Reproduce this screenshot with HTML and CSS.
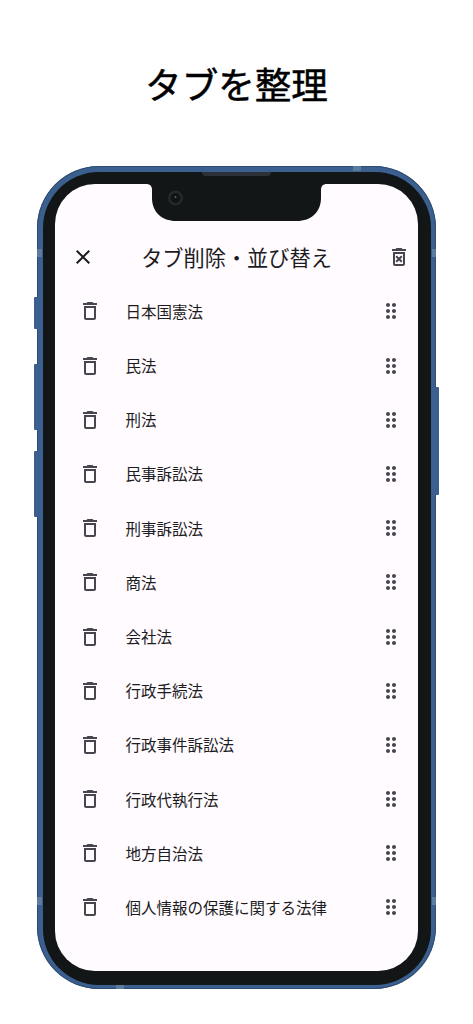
FILE: index.html
```html
<!DOCTYPE html>
<html lang="ja">
<head>
<meta charset="utf-8">
<title>タブを整理</title>
<link rel="stylesheet" href="styles.css">
</head>
<body>
<svg class="defs" width="0" height="0" aria-hidden="true">
  <symbol id="i-del" viewBox="0 0 24 24"><path d="M6 19c0 1.1.9 2 2 2h8c1.1 0 2-.9 2-2V7H6v12zM8 9h8v10H8V9zm7.5-5l-1-1h-5l-1 1H5v2h14V4z"/></symbol>
  <symbol id="i-drag" viewBox="0 0 24 24"><path d="M11 18c0 1.1-.9 2-2 2s-2-.9-2-2 .9-2 2-2 2 .9 2 2zm-2-8c-1.1 0-2 .9-2 2s.9 2 2 2 2-.9 2-2-.9-2-2-2zm0-6c-1.1 0-2 .9-2 2s.9 2 2 2 2-.9 2-2-.9-2-2-2zm6 4c1.1 0 2-.9 2-2s-.9-2-2-2-2 .9-2 2 .9 2 2 2zm0 2c-1.1 0-2 .9-2 2s.9 2 2 2 2-.9 2-2-.9-2-2-2zm0 6c-1.1 0-2 .9-2 2s.9 2 2 2 2-.9 2-2-.9-2-2-2z"/></symbol>
</svg>
<header class="page-head"><h1>タブを整理</h1></header>
<div class="phone">
  <span class="btn btn-a"></span><span class="btn btn-b"></span><span class="btn btn-c"></span><span class="btn btn-r"></span>
  <span class="band band-t"></span><span class="band band-b"></span>
  <span class="band band-l1"></span><span class="band band-l2"></span><span class="band band-r1"></span><span class="band band-r2"></span>
  <div class="bezel">
    <span class="speaker"></span>
    <main class="screen">
      <svg class="notch" width="181" height="37" viewBox="0 0 181 37" aria-hidden="true">
        <path class="notch-shape" d="M0 0C4 0 6 2 6 6V14C6 28 16 37 30 37H151C165 37 175 28 175 14V6C175 2 177 0 181 0Z"/>
        <circle class="cam-ring" cx="29.5" cy="14" r="7.5"/>
        <circle class="cam-lens" cx="29.5" cy="14" r="5"/>
        <circle class="cam-dot" cx="29.5" cy="13" r="1"/>
      </svg>
      <div class="toolbar">
        <svg class="icon close" viewBox="0 0 24 24"><path d="M19 6.41 17.59 5 12 10.59 6.41 5 5 6.41 10.59 12 5 17.59 6.41 19 12 13.41 17.59 19 19 17.59 13.41 12z"/></svg>
        <h2>タブ削除・並び替え</h2>
        <svg class="icon del-all" viewBox="0 0 24 24"><path d="M14.12 10.47L12 12.59l-2.13-2.12-1.41 1.41L10.59 14l-2.12 2.12 1.41 1.41L12 15.41l2.12 2.12 1.41-1.41L13.41 14l2.12-2.12zM15.5 4l-1-1h-5l-1 1H5v2h14V4zM6 19c0 1.1.9 2 2 2h8c1.1 0 2-.9 2-2V7H6v12zM8 9h8v10H8V9z"/></svg>
      </div>
      <ul class="list">
        <li class="row"><svg class="icon"><use href="#i-del"/></svg><span class="label">日本国憲法</span><svg class="icon"><use href="#i-drag"/></svg></li>
        <li class="row"><svg class="icon"><use href="#i-del"/></svg><span class="label">民法</span><svg class="icon"><use href="#i-drag"/></svg></li>
        <li class="row"><svg class="icon"><use href="#i-del"/></svg><span class="label">刑法</span><svg class="icon"><use href="#i-drag"/></svg></li>
        <li class="row"><svg class="icon"><use href="#i-del"/></svg><span class="label">民事訴訟法</span><svg class="icon"><use href="#i-drag"/></svg></li>
        <li class="row"><svg class="icon"><use href="#i-del"/></svg><span class="label">刑事訴訟法</span><svg class="icon"><use href="#i-drag"/></svg></li>
        <li class="row"><svg class="icon"><use href="#i-del"/></svg><span class="label">商法</span><svg class="icon"><use href="#i-drag"/></svg></li>
        <li class="row"><svg class="icon"><use href="#i-del"/></svg><span class="label">会社法</span><svg class="icon"><use href="#i-drag"/></svg></li>
        <li class="row"><svg class="icon"><use href="#i-del"/></svg><span class="label">行政手続法</span><svg class="icon"><use href="#i-drag"/></svg></li>
        <li class="row"><svg class="icon"><use href="#i-del"/></svg><span class="label">行政事件訴訟法</span><svg class="icon"><use href="#i-drag"/></svg></li>
        <li class="row"><svg class="icon"><use href="#i-del"/></svg><span class="label">行政代執行法</span><svg class="icon"><use href="#i-drag"/></svg></li>
        <li class="row"><svg class="icon"><use href="#i-del"/></svg><span class="label">地方自治法</span><svg class="icon"><use href="#i-drag"/></svg></li>
        <li class="row"><svg class="icon"><use href="#i-del"/></svg><span class="label">個人情報の保護に関する法律</span><svg class="icon"><use href="#i-drag"/></svg></li>
      </ul>
    </main>
  </div>
</div>
</body>
</html>
```
FILE: styles.css
```css
* { box-sizing: border-box; }
html, body { margin: 0; padding: 0; }
body {
  width: 473px;
  height: 1024px;
  overflow: hidden;
  background: #fff;
  font-family: "Noto Sans CJK JP", "Noto Sans", sans-serif;
  color: #1c1b1f;
}
.defs { position: absolute; }

.page-head {
  height: 166px;
  padding-top: 58px;
  text-align: center;
}
h1 {
  margin: 0;
  font-size: 36.6px;
  line-height: 52px;
  font-weight: 400;
  -webkit-text-stroke: 0.5px #000;
  color: #000;
}

.phone {
  position: relative;
  width: 399px;
  height: 823px;
  margin-left: 37px;
  border-radius: 62px;
  background: #3b5f8e;
  box-shadow: inset 0 0 0 1px #2f4c72;
  padding: 5.5px 5px 4.5px 5.5px;
}
.btn {
  position: absolute;
  width: 4px;
  background: #3b5f8e;
  border-radius: 1px;
}
.btn-a { left: -3px; top: 131px; height: 32px; }
.btn-b { left: -3px; top: 198px; height: 66px; }
.btn-c { left: -3px; top: 285px; height: 66px; }
.btn-r { right: -3px; top: 221px; height: 108px; }
.band { position: absolute; background: #5d7a9f; z-index: 1; }
.band-t { top: 0; left: 316px; width: 8px; height: 5px; }
.band-b { bottom: 0; left: 79px; width: 8px; height: 4px; }
.band-l1 { left: 0; top: 83px; width: 5px; height: 8px; }
.band-l2 { left: 0; top: 731px; width: 5px; height: 8px; }
.band-r1 { right: 0; top: 83px; width: 4px; height: 8px; }
.band-r2 { right: 0; top: 731px; width: 4px; height: 8px; }

.bezel {
  position: relative;
  height: 100%;
  background: #121617;
  border-radius: 56px;
  padding: 12.5px 13px 13.5px 12.5px;
}
.speaker {
  position: absolute;
  top: 0;
  left: 159.5px;
  width: 69px;
  height: 4px;
  background: #2b3237;
  border-radius: 0 0 4px 4px;
}
.screen {
  position: relative;
  height: 100%;
  background: #fffbfe;
  border-radius: 40px;
  overflow: hidden;
  padding-top: 46px;
}
.notch { position: absolute; top: 0; left: 91px; }
.notch-shape { fill: #121617; }
.cam-ring { fill: #23292c; }
.cam-lens { fill: #101415; }
.cam-dot { fill: #59676d; }

.icon {
  flex: none;
  display: block;
  width: 24px;
  height: 24px;
  fill: #49454f;
}
.toolbar {
  height: 54px;
  display: grid;
  grid-template-columns: 1fr auto 1fr;
  align-items: center;
  padding: 0 7.5px;
}
.toolbar h2 {
  margin: 0 0 1px;
  font-size: 21.2px;
  line-height: 30px;
  font-weight: 400;
  white-space: nowrap;
}
.close { fill: #1c1b1f; margin-left: 8px; }
.del-all { justify-self: end; }

.list { list-style: none; margin: 0; padding: 0.4px 0 0; }
.row {
  display: flex;
  align-items: center;
  gap: 23.5px;
  height: 54.18px;
  padding: 0 15px 0 23px;
}
.label {
  flex: 1;
  font-size: 15.5px;
  line-height: 22px;
  padding-bottom: 1px;
  white-space: nowrap;
}
```
